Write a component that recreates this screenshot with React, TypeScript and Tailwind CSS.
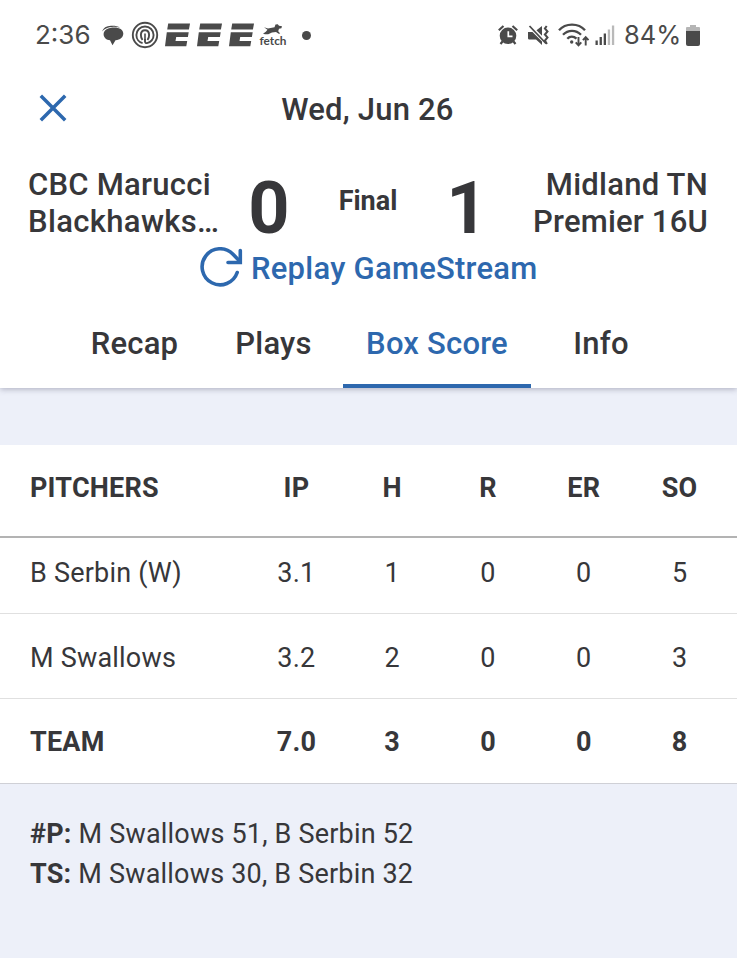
import React from "react";

const INK = "#4a4a4a";

function StatusE({ className }: { className: string }) {
  return (
    <svg viewBox="0 0 25 24" className={`h-6 w-[25px] shrink-0 ${className}`} fill={INK}>
      <path d="M3.200 .5H25L23.900 6.600H2.200z" />
      <path d="M1.800 9.300H23.700L22.900 13.900H11.200L10.500 17.900H22.200L21.300 23.300H0z" />
    </svg>
  );
}

function StatusBar() {
  return (
    <div className="flex h-[70px] items-center pl-[35px] text-[#4a4a4a]">
      <span className="w-[67px] font-[Inter] text-[26px] leading-8 tracking-[0px]">2:36</span>
      <svg viewBox="0 0 22 22" className="h-[22px] w-[22px] shrink-0" fill={INK}>
        <path d="M.3 7.500C1 4 4.500 1.800 9 1.700c4-.1 7 .3 9 2C15 2.700 11 2.300 7.500 3.300 4 4.100 1.800 5.500 .3 7.500z" />
        <path d="M12.500 3.500c5 0 8.800 2.200 8.800 6 0 3.700-3 6.300-7.800 6.800l-3 5-2.500-5C4.500 16 1.600 13.800 1.600 10.300 1.600 6 6 3.500 12.500 3.500z" />
      </svg>
      <svg viewBox="0 0 28 28" className="ml-[7px] h-7 w-7 shrink-0" fill="none" stroke={INK} strokeWidth="1.900">
        <circle cx="14" cy="14" r="12.200" />
        <path d="M14 18v2.500c0 1 .8 1.700 2 1.600 3.800-.4 6.600-4 6.600-8.100 0-4.800-3.800-8.500-8.600-8.500s-8.600 3.700-8.600 8.500c0 4 2.600 7.300 6.200 8.200" />
        <path d="M11.500 19c-1-1.200-1.600-3-1.600-5 0-2.900 1.700-4.800 4.100-4.800s4.100 1.900 4.100 4.800c0 2-.6 3.800-1.600 5" />
        <path d="M14 12.500V19" strokeWidth="1.600" />
      </svg>
      <StatusE className="ml-[5.500px]" />
      <StatusE className="ml-[7px]" />
      <StatusE className="ml-[7px]" />
      <div className="ml-[6.500px] flex h-[26px] w-[26px] shrink-0 flex-col items-center pt-[2px]">
        <svg viewBox="0 0 20 11" className="h-[11px] w-5 shrink-0" fill={INK}>
          <path d="M1 3.200 5 4.600 11.500 3.200 12.500.5l2.300-.3 1.200 1.500 3 .6-.6 2-2.400.4-.8 2.600 2 2.200-1.500.3-2.700-1.800-4 .5-3.800 1.800L2 10.200 0 9.800l2.800-2.100 1.700-1.900z" />
        </svg>
        <span className="-mt-px font-[Lato] text-[11.800px] font-bold leading-[14px]">fetch</span>
      </div>
      <span className="ml-4 h-[9px] w-[9px] shrink-0 rounded-full bg-[#4a4a4a]" />
      <svg viewBox="0 0 20 20" className="ml-[187px] h-5 w-5 shrink-0" fill={INK}>
        <path d="M.8 5.200 5.500 1M19.200 5.200 14.500 1M4.500 16.500 2.500 19M15.500 16.500l2 2.500" stroke={INK} strokeWidth="2.200" />
        <circle cx="10" cy="10.800" r="8.300" />
        <path d="M10.300 6.200v5.200h4.200" fill="none" stroke="#fff" strokeWidth="1.700" />
      </svg>
      <svg viewBox="0 0 22 22" className="ml-[10px] h-[22px] w-[22px] shrink-0" fill={INK}>
        <path d="M0 8h4.500L14 17.500V21l-6-5.500H2C.5 15.500 0 15 0 14zM8.500 6.300 14 2v9.800z" />
        <path d="M1.500 2 18 19.500" stroke={INK} strokeWidth="1.800" />
        <path d="M18.700 2l-1.800 2.500 2.600 3-2.600 3 2.600 3-2.600 3 2 3.500" fill="none" stroke={INK} strokeWidth="2" />
      </svg>
      <svg viewBox="0 0 32 24" className="ml-[8px] h-6 w-8 shrink-0" fill="none" stroke={INK} strokeWidth="2.300">
        <path d="M1 7.200C7.500-.3 20.500-.3 27 7.200M5 11.800c5-5.300 13-5.300 18 0M9.300 15.700c2.600-2.700 6.400-2.700 9.200 0" />
        <circle cx="13.700" cy="19" r="1.700" fill={INK} stroke="none" />
        <path d="M20.500 14v8M17.700 19.300l2.800 3 2.800-3M27.700 22.500v-8M24.900 17.200l2.800-3 2.800 3" strokeWidth="1.900" />
      </svg>
      <svg viewBox="0 0 20 20" className="ml-[5px] h-5 w-5 shrink-0" fill={INK}>
        <path d="M.5 15.500h2.300V20H.5zM4.600 12h2.300v8H4.600zM8.700 8.500h2.300V20H8.700z" />
        <path fill="#b9b9b9" d="M12.800 4.500h2.300V20h-2.300zM16.900.5h2.300V20h-2.300z" />
      </svg>
      <span className="ml-[9px] w-[62px] shrink-0 font-[Inter] text-[25.500px] leading-8">84%</span>
      <svg viewBox="0 0 14 21" className="h-[21px] w-[14px] shrink-0" fill={INK}>
        <path fill="#b5b5b5" d="M4 0h6v2h3q1 0 1 1v4H0V3q0-1 1-1h3z" />
        <path d="M0 6h14v13q0 2-2 2H2q-2 0-2-2z" />
      </svg>
    </div>
  );
}

const tabs = [
  { label: "Recap", width: "w-[139px]" },
  { label: "Plays", width: "w-[139px]" },
  { label: "Box Score", width: "w-[188px]", active: true },
  { label: "Info", width: "w-[140px]" },
];

const rows = [
  { cells: ["PITCHERS", "IP", "H", "R", "ER", "SO"], style: "h-[93px] pb-[4px] border-b-2 border-[#b3b3b3] font-bold" },
  { cells: ["B Serbin (W)", "3.1", "1", "0", "0", "5"], style: "h-[76px] pb-[4px] border-b border-[#e0e0e0]" },
  { cells: ["M Swallows", "3.2", "2", "0", "0", "3"], style: "h-[85px] pt-[4px] border-b border-[#e0e0e0]" },
  { cells: ["TEAM", "7.0", "3", "0", "0", "8"], style: "h-[85px] pt-[2px] border-b border-[#cfd0d6] font-bold" },
];

export default function App() {
  return (
    <div className="h-[958px] w-[737px] overflow-hidden bg-[#edf0f9] font-[Roboto,sans-serif] text-[#37373a]">
      <div className="relative h-[388px] bg-white shadow-[0_1px_6px_rgba(70,70,100,0.4)]">
        <StatusBar />
        <header className="grid h-[76px] grid-cols-[1fr_auto_1fr] items-center pl-[39px] pr-[41px]">
          <svg viewBox="0 0 28 28" className="h-7 w-7" stroke="#2d68ae" strokeWidth="3.500" fill="none">
            <path d="M1.800 1.800 26.200 26.200M26.200 1.800 1.800 26.200" />
          </svg>
          <h1 className="pt-[5px] text-[31px] font-medium tracking-[0.2px]">Wed, Jun 26</h1>
        </header>
        <section className="flex h-[100px] pl-[28px] pr-[29px] pt-[20px] text-[31px] font-medium leading-[37px] tracking-[0.25px]">
          <div className="w-[205px] whitespace-nowrap">
            <p>CBC Marucci</p>
            <p className="tracking-[0.35px]">Blackhawks…</p>
          </div>
          <div className="w-[72px] pt-[4px] text-center text-[72px] font-bold leading-[78px]">0</div>
          <div className="w-[126px] text-center text-[27px] font-bold leading-[70px] tracking-normal">Final</div>
          <div className="w-[72px] pt-[4px] text-center text-[72px] font-bold leading-[78px]">1</div>
          <div className="flex-1 whitespace-nowrap text-right">
            <p>Midland TN</p>
            <p className="tracking-[0.2px]">Premier 16U</p>
          </div>
        </section>
        <div className="flex h-[44px] items-center pl-[200px] text-[31px] font-medium tracking-[0.25px] text-[#2d68ae]">
          <svg viewBox="0 0 43 40" className="mb-[2px] mr-2 h-10 w-[43px] shrink-0" fill="none" stroke="#2d68ae" strokeWidth="3.600" strokeLinecap="round">
            <path d="M37.200 25.500A18 18 0 1 1 33 7.200L40 14.500" />
            <path d="M40.300 3.500V15.500H28" />
          </svg>
          <span className="pt-[2px]">Replay GameStream</span>
        </div>
        <nav className="flex h-[98px] pl-[65px] text-[31px] font-medium tracking-[0.2px]">
          {tabs.map((t) => (
            <div
              key={t.label}
              className={`flex items-center justify-center ${t.width} ${t.active ? "border-b-4 border-[#2d68ae] pt-[14px] text-[#2d68ae]" : "pt-[10px]"}`}
            >
              {t.label}
            </div>
          ))}
        </nav>
      </div>
      <div className="mt-[57px] bg-white text-[27px] tracking-[0.2px]">
        {rows.map((r) => (
          <div key={r.cells[0]} className={`grid grid-cols-[218.500px_repeat(5,95.800px)] items-center pl-[30px] ${r.style}`}>
            {r.cells.map((c, i) => (
              <span key={i} className={i ? "text-center" : ""}>{c}</span>
            ))}
          </div>
        ))}
      </div>
      <div className="pl-[30px] pt-[30px] text-[27px] leading-[40px] tracking-[0.2px]">
        <p><b>#P:</b> M Swallows 51, B Serbin 52</p>
        <p><b>TS:</b> M Swallows 30, B Serbin 32</p>
      </div>
    </div>
  );
}
